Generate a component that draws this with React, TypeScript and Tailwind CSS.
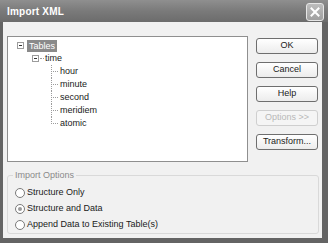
import type { ReactNode } from "react";

const font = "font-['Liberation_Sans','Arial',sans-serif]";

const leaves = ["hour", "minute", "second", "meridiem", "atomic"];

const buttons: Array<[string, boolean]> = [
  ["OK", true],
  ["Cancel", true],
  ["Help", true],
  ["Options >>", false],
  ["Transform...", true]
];

const options = [
  { label: "Structure Only", checked: false },
  { label: "Structure and Data", checked: true },
  { label: "Append Data to Existing Table(s)", checked: false }
];

export default function App() {
  return (
    <div className={`flex h-[243px] w-[328px] flex-col overflow-hidden bg-[#646464] ${font}`}>
      <TitleBar />
      <div className="ml-[3px] mr-[6px] mb-[5px] flex flex-1 flex-col bg-[#f1f1f1] px-[4px]">
        <div className="mt-[14px] flex gap-[8px]">
          <TreePanel />
          <div className="flex flex-col gap-[8px] pt-[2px]">
            {buttons.map(([label, enabled]) => (
              <DialogButton key={label} enabled={enabled}>
                {label}
              </DialogButton>
            ))}
          </div>
        </div>
        <ImportOptions />
      </div>
    </div>
  );
}

function TitleBar() {
  return (
    <div className="flex h-[22px] shrink-0 items-center justify-between bg-gradient-to-b from-[#8f8f8f] via-[#7a7a7a] to-[#6c6c6c] pl-[7px] pr-[4px]">
      <span className="text-[10px] font-bold tracking-[0.2px] text-white">Import XML</span>
      <div className="mt-[1px] flex h-[18px] w-[18px] items-center justify-center rounded-[3px] border border-[#e6e6e6] bg-gradient-to-b from-[#bdbdbd] to-[#a0a0a0]">
        <svg width="10" height="10" viewBox="0 0 10 10">
          <path d="M1.5 1.5 L8.5 8.5 M8.5 1.5 L1.5 8.5" stroke="white" strokeWidth="2" strokeLinecap="square" />
        </svg>
      </div>
    </div>
  );
}

function MinusBox() {
  return (
    <span className="flex h-[7px] w-[7px] shrink-0 items-center justify-center border border-[#9c9c9c] bg-white">
      <span className="h-px w-[3px] bg-[#333]" />
    </span>
  );
}

function TreePanel() {
  return (
    <div className="h-[126px] w-[242px] border border-[#8f8f8f] bg-white pl-[9px] pt-[2px] text-[9px] text-[#1a1a1a]">
      <div className="flex h-[13px] items-center">
        <MinusBox />
        <span className="ml-[3px] bg-[#8a8a8a] px-[2px] leading-[12px] text-white">Tables</span>
      </div>
      <div className="flex h-[13px] items-center pl-[15px]">
        <MinusBox />
        <span className="mx-[1px] w-[4px] border-t border-dotted border-[#9c9c9c]" />
        <span>time</span>
      </div>
      <div className="ml-[34px]">
        {leaves.map((leaf, i) => (
          <div key={leaf} className="flex h-[13px] items-center">
            <div className="relative h-full w-[8px] shrink-0">
              <span
                className={`absolute left-0 top-0 border-l border-dotted border-[#9c9c9c] ${
                  i === leaves.length - 1 ? "h-[7px]" : "h-full"
                }`}
              />
              <span className="absolute left-0 top-[6px] w-[7px] border-t border-dotted border-[#9c9c9c]" />
            </div>
            <span className="ml-[1px]">{leaf}</span>
          </div>
        ))}
      </div>
    </div>
  );
}

function DialogButton({ children, enabled }: { children: ReactNode; enabled: boolean }) {
  return (
    <div
      className={`flex h-[16px] w-[62px] items-center justify-center rounded-[3px] border text-[9px] ${
        enabled
          ? "border-[#6e6e6e] bg-gradient-to-b from-white to-[#ececec] text-[#1a1a1a]"
          : "border-[#cfcfcf] bg-[#f5f5f5] text-[#b8b8b8]"
      }`}
    >
      {children}
    </div>
  );
}

function ImportOptions() {
  return (
    <div className="relative mt-[13px] h-[59px] w-[312px] rounded-[3px] border border-[#d9d9d9] pl-[7px] pt-[12px]">
      <span className="absolute -top-[6px] left-[5px] bg-[#f1f1f1] px-[2px] text-[9px] leading-[11px] text-[#8a8a8a]">
        Import Options
      </span>
      <div className="flex flex-col gap-[6px]">
        {options.map((opt) => (
          <div key={opt.label} className="flex h-[10px] items-center gap-[2px] text-[9px] text-[#1a1a1a]">
            <span className="flex h-[10px] w-[10px] items-center justify-center rounded-full border border-[#7a7a7a] bg-white">
              {opt.checked && <span className="h-[4px] w-[4px] rounded-full bg-[#9a9a9a]" />}
            </span>
            <span>{opt.label}</span>
          </div>
        ))}
      </div>
    </div>
  );
}
